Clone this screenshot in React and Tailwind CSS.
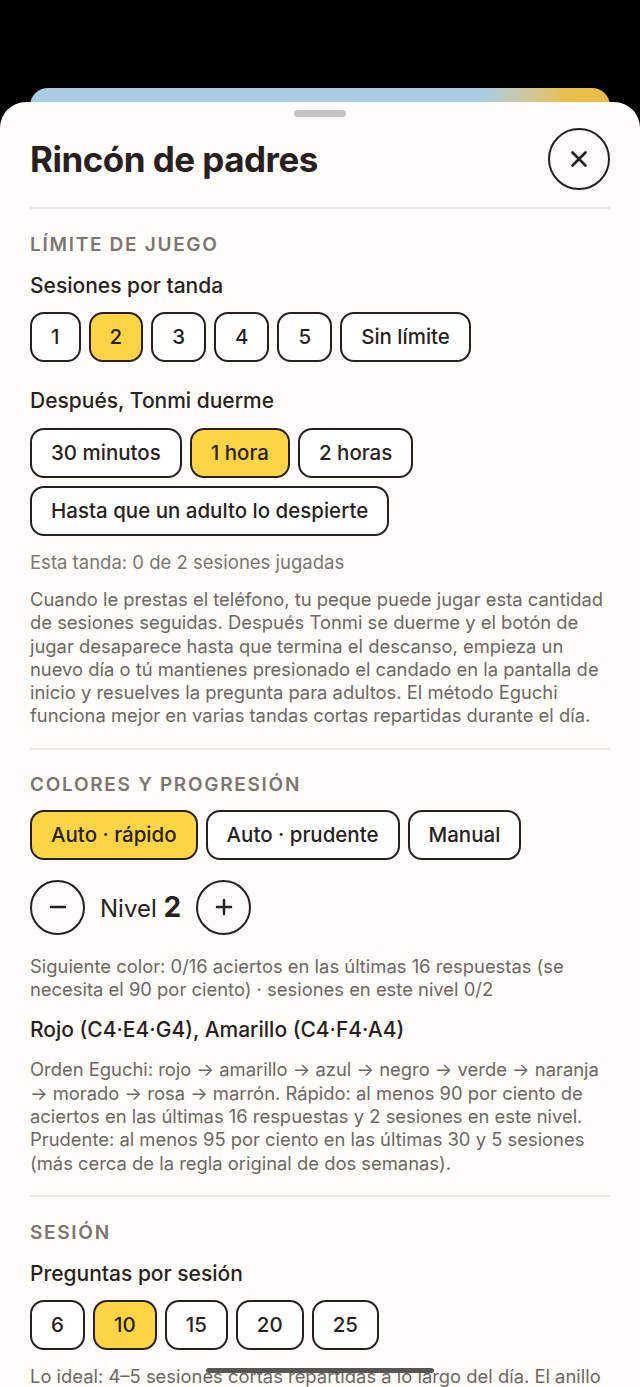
import { X, Minus, Plus } from 'lucide-react';

const Chip = ({ label, active }) => (
  <button
    className={`h-[50px] px-[19px] rounded-[14px] border-[2.5px] border-[#2a1f1f] text-[20.5px] font-medium text-[#2a1f1f] leading-none ${
      active ? 'bg-[#fdd446]' : 'bg-white'
    }`}
  >
    {label}
  </button>
);

const Heading = ({ children }) => (
  <h2 className="text-[19px] font-semibold tracking-[0.09em] text-[#7d7572] leading-[24px]">{children}</h2>
);

const Label = ({ children, className = '' }) => (
  <h3 className={`text-[21px] font-medium text-[#2a1f1f] leading-[24px] ${className}`}>{children}</h3>
);

const Body = ({ children, className = '' }) => (
  <p className={`text-[18.4px] text-[#6e6764] leading-[23.3px] ${className}`}>{children}</p>
);

const App = () => {
  return (
    <div
      className="relative h-[1387px] overflow-hidden bg-black pt-[88px]"
      style={{ fontFamily: 'Inter, "Noto Sans", sans-serif' }}
    >
      <div className="mx-[30px] h-[40px] rounded-t-[18px] bg-gradient-to-r from-[#a8cce2] from-78% via-[#e9c04c] via-92% to-[#e8bd45]" />

      <div className="relative -mt-[26px] h-[1400px] rounded-t-[26px] bg-[#fdfcf8] px-[30px]">
        <div className="flex justify-center pt-[8px]">
          <div className="h-[7px] w-[52px] rounded-full bg-[#c5c3c0]" />
        </div>

        <div className="mt-[11px] flex items-center justify-between">
          <h1 className="text-[35px] font-bold tracking-[-0.015em] text-[#2a1f1f]">Rincón de padres</h1>
          <button className="flex h-[62px] w-[62px] items-center justify-center rounded-full border-2 border-[#2a1f1f] text-[#2a1f1f]">
            <X size={26} strokeWidth={2.5} />
          </button>
        </div>

        <div className="mt-[17px] h-[2px] bg-[#ebe8e3]" />

        {/* Límite de juego */}
        <section className="pt-[24px] pb-[20px]">
          <Heading>LÍMITE DE JUEGO</Heading>
          <Label className="mt-[17px]">Sesiones por tanda</Label>
          <div className="mt-[14px] flex flex-wrap gap-2">
            {['1', '2', '3', '4', '5', 'Sin límite'].map((l) => (
              <Chip key={l} label={l} active={l === '2'} />
            ))}
          </div>
          <Label className="mt-[27px]">Después, Tonmi duerme</Label>
          <div className="mt-[15px] flex flex-wrap gap-2">
            {['30 minutos', '1 hora', '2 horas', 'Hasta que un adulto lo despierte'].map((l) => (
              <Chip key={l} label={l} active={l === '1 hora'} />
            ))}
          </div>
          <p className="mt-[15px] text-[18.5px] leading-[22px] text-[#7d7572]">Esta tanda: 0 de 2 sesiones jugadas</p>
          <Body className="mt-[15px]">
            Cuando le prestas el teléfono, tu peque puede jugar esta cantidad de sesiones seguidas. Después Tonmi se
            duerme y el botón de jugar desaparece hasta que termina el descanso, empieza un nuevo día o tú mantienes
            presionado el candado en la pantalla de inicio y resuelves la pregunta para adultos. El método Eguchi
            funciona mejor en varias tandas cortas repartidas durante el día.
          </Body>
        </section>

        <div className="h-[2px] bg-[#ebe8e3]" />

        {/* Colores y progresión */}
        <section className="pt-[23px] pb-[20px]">
          <Heading>COLORES Y PROGRESIÓN</Heading>
          <div className="mt-[13px] flex flex-wrap gap-2">
            {['Auto · rápido', 'Auto · prudente', 'Manual'].map((l) => (
              <Chip key={l} label={l} active={l === 'Auto · rápido'} />
            ))}
          </div>
          <div className="mt-[20px] flex items-center gap-[15px]">
            <button className="flex h-[55px] w-[55px] items-center justify-center rounded-full border-2 border-[#2a1f1f] text-[#2a1f1f]">
              <Minus size={24} strokeWidth={2.5} />
            </button>
            <span className="text-[24px] text-[#2a1f1f]">
              Nivel <span className="text-[28px] font-bold">2</span>
            </span>
            <button className="flex h-[55px] w-[55px] items-center justify-center rounded-full border-2 border-[#2a1f1f] text-[#2a1f1f]">
              <Plus size={24} strokeWidth={2.5} />
            </button>
          </div>
          <Body className="mt-[20px]">
            Siguiente color: 0/16 aciertos en las últimas 16 respuestas (se necesita el 90 por ciento) · sesiones en
            este nivel 0/2
          </Body>
          <Label className="mt-[17px]">Rojo (C4·E4·G4), Amarillo (C4·F4·A4)</Label>
          <Body className="mt-[16px]">
            Orden Eguchi: rojo → amarillo → azul → negro → verde → naranja → morado → rosa → marrón. Rápido: al menos
            90 por ciento de aciertos en las últimas 16 respuestas y 2 sesiones en este nivel. Prudente: al menos 95
            por ciento en las últimas 30 y 5 sesiones (más cerca de la regla original de dos semanas).
          </Body>
        </section>

        <div className="h-[2px] bg-[#ebe8e3]" />

        {/* Sesión */}
        <section className="pt-[24px]">
          <Heading>SESIÓN</Heading>
          <Label className="mt-[17px]">Preguntas por sesión</Label>
          <div className="mt-[14px] flex flex-wrap gap-2">
            {['6', '10', '15', '20', '25'].map((l) => (
              <Chip key={l} label={l} active={l === '10'} />
            ))}
          </div>
          <Body className="mt-[15px]">
            Lo ideal: 4–5 sesiones cortas repartidas a lo largo del día. El anillo muestra cuántas preguntas quedan en
            la sesión actual.
          </Body>
        </section>
      </div>

      <div className="absolute bottom-[14px] left-1/2 h-[5px] w-[228px] -translate-x-1/2 rounded-full bg-[#5a5552]" />
    </div>
  );
};

export default App;
